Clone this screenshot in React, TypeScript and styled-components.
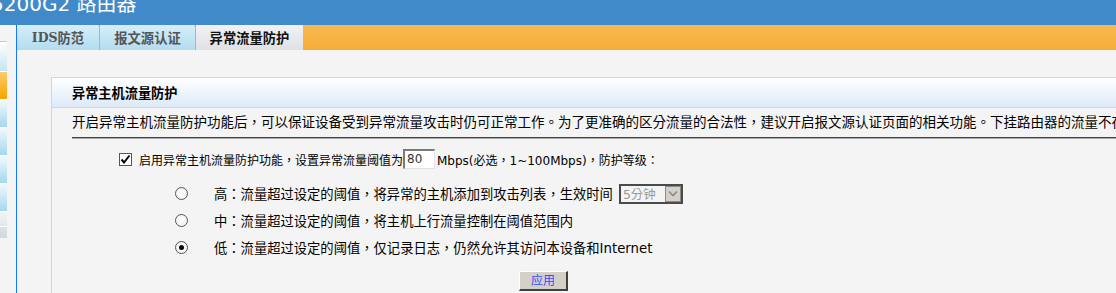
import React, { FC } from "react";
import styled, { createGlobalStyle, css } from "styled-components";

const GlobalStyle = createGlobalStyle`
  html, body {
    margin: 0;
    padding: 0;
    background: #f4f4f4;
  }
  body {
    font-family: "DejaVu Sans", "Noto Sans CJK SC", sans-serif;
    color: #000;
  }
`;

const Page = styled.div`
  width: 1116px;
  height: 293px;
  overflow: hidden;
  background: #f4f4f4;
  display: flex;
  flex-direction: column;
  white-space: nowrap;
`;

const TopBar = styled.div`
  height: 25px;
  flex: none;
  background: #408ac9;
  overflow: hidden;
`;

const Brand = styled.div`
  margin: -7px 0 0 -9px;
  font-size: 20px;
  line-height: 22px;
  color: #fff;
`;

const Main = styled.div`
  flex: 1;
  display: flex;
  min-height: 0;
`;

const Sidebar = styled.div`
  width: 16px;
  flex: none;
  border-right: 1px solid #1577ff;
  padding-top: 16px;
  display: flex;
  flex-direction: column;
`;

type ItemKind = "light" | "orange" | "blue" | "gray" | "grayDark";

const itemColors: Record<ItemKind, string> = {
  light: "linear-gradient(#ffffff, #c4e6f4)",
  orange: "linear-gradient(#fccb6a, #f6a400)",
  blue: "linear-gradient(#f1f9fd, #a6d8ee)",
  gray: "linear-gradient(#f2f4f6, #e3e7ea)",
  grayDark: "linear-gradient(#dfe2e5, #d4d7da)",
};

const SideItem = styled.div<{ kind: ItemKind; h: number }>`
  width: 7px;
  height: ${({ h }) => h}px;
  box-sizing: border-box;
  background: ${({ kind }) => itemColors[kind]};
  border-top: 1px solid ${({ kind }) => (kind === "light" ? "#b9cfe0" : "#ffffff")};
`;

const Content = styled.div`
  flex: 1;
  display: flex;
  flex-direction: column;
  min-width: 0;
`;

const TabBar = styled.div`
  height: 25px;
  flex: none;
  display: flex;
  background: linear-gradient(#f8b851, #f7ae38);
`;

const Tab = styled.div<{ active?: boolean; w: number }>`
  position: relative;
  width: ${({ w }) => w}px;
  box-sizing: border-box;
  display: flex;
  align-items: center;
  justify-content: center;
  font-family: "DejaVu Serif", "Noto Sans CJK SC", serif;
  font-size: 13.3px;
  font-weight: bold;
  ${({ active }) =>
    active
      ? css`
          background: linear-gradient(#f1f2f3, #dfe1e4);
          color: #111;
        `
      : css`
          background: linear-gradient(#d6eef8, #b2ddf0);
          color: #555;
          border-right: 1px solid #f3a93c;
          &::after {
            content: "";
            position: absolute;
            right: -3px;
            top: 0;
            border-left: 2.5px solid transparent;
            border-right: 2.5px solid transparent;
            border-top: 3px solid #f3a93c;
          }
        `}
`;

const TabLatin = styled.span`
  font-size: 12.5px;
`;

const Body = styled.div`
  flex: 1;
  padding: 27px 0 0 34px;
`;

const Panel = styled.div`
  border-left: 1px solid #c5d9ef;
  border-top: 1px solid #c5d9ef;
  height: 100%;
`;

const PanelHeader = styled.div`
  height: 29px;
  border-bottom: 1px solid #c5d9ef;
  background: linear-gradient(#ffffff, #dde9f8);
  padding-left: 20px;
  display: flex;
  align-items: center;
  font-size: 13.2px;
  font-weight: bold;
  font-family: "Noto Sans CJK SC", sans-serif;
`;

const PanelBody = styled.div`
  padding-left: 20px;
`;

const Description = styled.div`
  margin-top: 4px;
  line-height: 20px;
  font-size: 13.5px;
`;

const Divider = styled.div`
  margin-top: 5px;
  height: 0;
  border-top: 1px solid #444;
  border-bottom: 1px solid #a9a9a9;
`;

const CheckRow = styled.div`
  margin-top: 10px;
  height: 20px;
  padding-left: 47px;
  display: flex;
  align-items: center;
  font-size: 12px;
`;

const CheckBox = styled.span`
  width: 13px;
  height: 13px;
  box-sizing: border-box;
  border: 1px solid #555;
  background: #fff;
  display: inline-flex;
  align-items: center;
  justify-content: center;
  margin-right: 7px;
`;

const RateInput = styled.span`
  width: 32px;
  height: 20px;
  box-sizing: border-box;
  border-top: 2px solid #7a7a7a;
  border-left: 2px solid #7a7a7a;
  border-right: 1px solid #e2e2e2;
  border-bottom: 1px solid #e2e2e2;
  background: #fff;
  color: #333;
  font-size: 12px;
  line-height: 17px;
  padding-left: 2px;
  margin: 0 2px 0 0;
`;

const Options = styled.div`
  margin-top: 11px;
  display: flex;
  flex-direction: column;
`;

const OptionRow = styled.div`
  height: 27px;
  padding-left: 103px;
  display: flex;
  align-items: center;
  font-size: 13.3px;
`;

const Radio = styled.span<{ checked?: boolean }>`
  width: 13px;
  height: 13px;
  box-sizing: border-box;
  border-radius: 50%;
  border: 1px solid #555;
  background: radial-gradient(#fff, #f0f0f0);
  display: inline-flex;
  align-items: center;
  justify-content: center;
  margin-right: 26px;
  &::after {
    content: "";
    width: 5px;
    height: 5px;
    border-radius: 50%;
    background: ${({ checked }) => (checked ? "#000" : "transparent")};
  }
`;

const TimeSelect = styled.span`
  margin-left: 6px;
  width: 64px;
  height: 20px;
  box-sizing: border-box;
  border: 2px solid #4a4a4a;
  background: #f4f4f4;
  display: flex;
  align-items: center;
  justify-content: space-between;
  color: #999;
  font-size: 12.5px;
  padding-left: 2px;
`;

const SelectArrow = styled.span`
  width: 16px;
  height: 16px;
  box-sizing: border-box;
  background: #d4d0c8;
  border: 1px solid #8a8a8a;
  display: flex;
  align-items: center;
  justify-content: center;
`;

const Actions = styled.div`
  margin-top: 9px;
  padding-left: 447px;
`;

const ApplyButton = styled.button`
  width: 49px;
  height: 20px;
  box-sizing: border-box;
  padding: 0;
  background: #d4d0c8;
  border-top: 1px solid #ffffff;
  border-left: 1px solid #ffffff;
  border-right: 2px solid #404040;
  border-bottom: 2px solid #404040;
  color: #3c4cff;
  font-family: "Noto Sans CJK SC", sans-serif;
  font-size: 12px;
  line-height: 16px;
`;

const sideItems: { kind: ItemKind; h: number }[] = [
  { kind: "light", h: 30 },
  { kind: "orange", h: 28 },
  { kind: "blue", h: 28 },
  { kind: "blue", h: 28 },
  { kind: "blue", h: 28 },
  { kind: "blue", h: 28 },
  { kind: "gray", h: 15 },
  { kind: "grayDark", h: 12 },
];

const levels = [
  { label: "高：流量超过设定的阈值，将异常的主机添加到攻击列表，生效时间", select: true },
  { label: "中：流量超过设定的阈值，将主机上行流量控制在阈值范围内" },
  { label: "低：流量超过设定的阈值，仅记录日志，仍然允许其访问本设备和Internet", checked: true },
];

const App: FC = () => {
  return (
    <>
      <GlobalStyle />
      <Page lang="zh-Hant">
        <TopBar>
          <Brand>5200G2 路由器</Brand>
        </TopBar>
        <Main>
          <Sidebar>
            {sideItems.map((item, i) => (
              <SideItem key={i} kind={item.kind} h={item.h} />
            ))}
          </Sidebar>
          <Content>
            <TabBar>
              <Tab w={83}>
                <TabLatin>IDS</TabLatin>防范
              </Tab>
              <Tab w={96}>报文源认证</Tab>
              <Tab w={107} active>
                异常流量防护
              </Tab>
            </TabBar>
            <Body>
              <Panel>
                <PanelHeader>异常主机流量防护</PanelHeader>
                <PanelBody>
                  <Description>
                    开启异常主机流量防护功能后，可以保证设备受到异常流量攻击时仍可正常工作。为了更准确的区分流量的合法性，建议开启报文源认证页面的相关功能。下挂路由器的流量不在异常主机流量防护的范围内。
                  </Description>
                  <Divider />
                  <CheckRow>
                    <CheckBox>
                      <svg width="11" height="11" viewBox="0 0 11 11">
                        <path d="M1.5 5.5 L4 8.5 L9.5 1.5" fill="none" stroke="#000" strokeWidth="2" />
                      </svg>
                    </CheckBox>
                    启用异常主机流量防护功能，设置异常流量阈值为
                    <RateInput>80</RateInput>
                    Mbps(必选，1~100Mbps)，防护等级：
                  </CheckRow>
                  <Options>
                    {levels.map((level, i) => (
                      <OptionRow key={i}>
                        <Radio checked={level.checked} />
                        {level.label}
                        {level.select ? (
                          <TimeSelect>
                            5分钟
                            <SelectArrow>
                              <svg width="10" height="7" viewBox="0 0 10 7">
                                <path d="M1 1.5 L5 5.5 L9 1.5" fill="none" stroke="#8a8a8a" strokeWidth="1.6" />
                              </svg>
                            </SelectArrow>
                          </TimeSelect>
                        ) : null}
                      </OptionRow>
                    ))}
                  </Options>
                  <Actions>
                    <ApplyButton>应用</ApplyButton>
                  </Actions>
                </PanelBody>
              </Panel>
            </Body>
          </Content>
        </Main>
      </Page>
    </>
  );
};

export default App;
